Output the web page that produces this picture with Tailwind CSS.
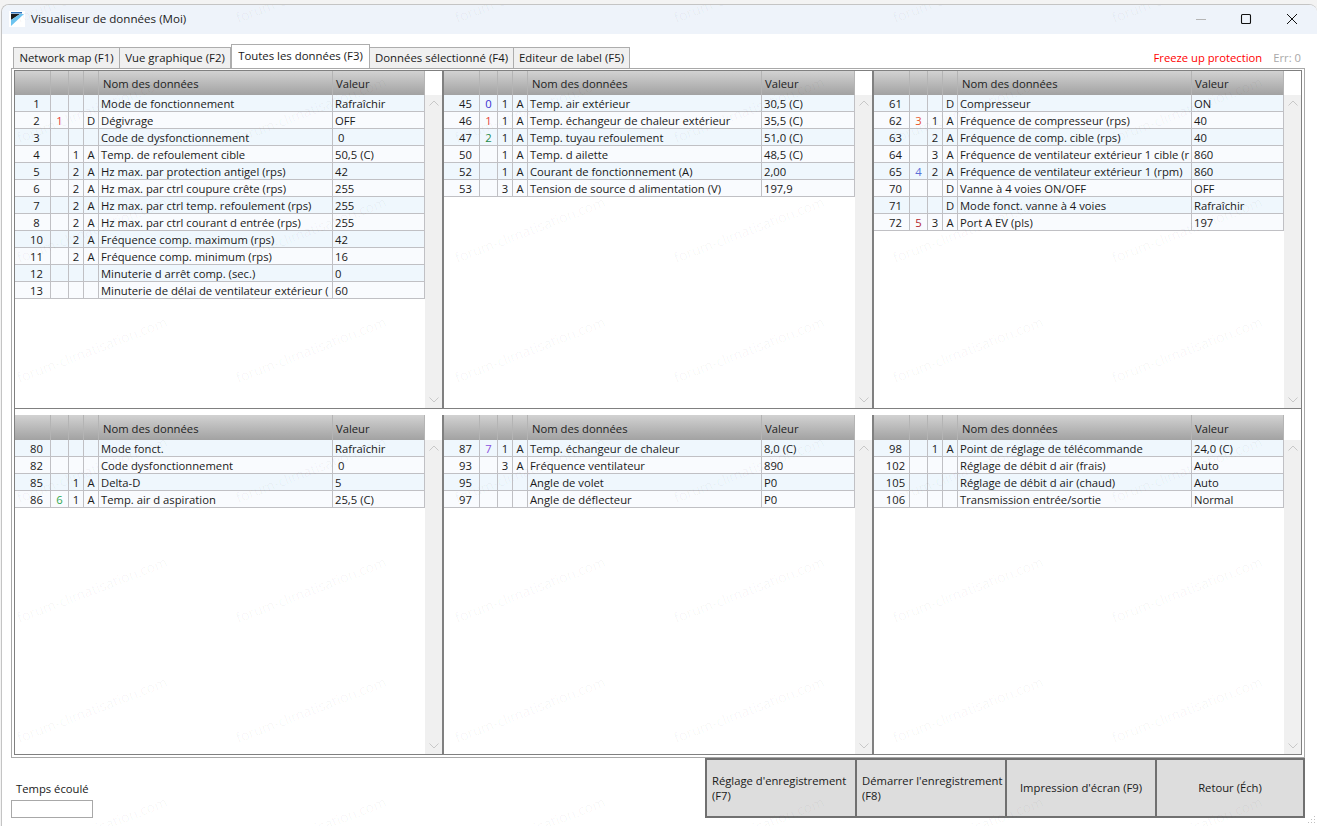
<!DOCTYPE html>
<html lang="fr">
<head>
  <meta charset="UTF-8" />
  <title>Visualiseur de données (Moi)</title>
  <script src="https://cdn.jsdelivr.net/npm/@tailwindcss/browser@4"></script>
</head>
<body class="bg-[#f3f3f3] h-[826px] overflow-hidden font-['Open_Sans','Noto_Sans',sans-serif] text-[11.25px] text-[#1a1a1a]">

  <div class="relative mt-[4px] ml-[1px] w-[1316px] h-[822px] bg-white rounded-t-[8px] border-l border-t border-[#c4c4c4] overflow-hidden">

    <!-- title bar -->
    <div class="flex items-center h-[29px] pb-[1px] bg-[#eef3fa]">
      <svg class="ml-[7px] w-[16px] h-[16px]" viewBox="0 0 16 16">
        <rect width="16" height="16" fill="#fff" />
        <rect x="2" y="1" width="11" height="1.5" fill="#2a6db5" />
        <polygon points="2,3 11,3 2,9" fill="#1a1a1a" />
        <polygon points="11,3 15,3 2,15 2,9" fill="#6cc3ef" />
      </svg>
      <span class="ml-[6px] text-[11.6px] text-[#222]">Visualiseur de données (Moi)</span>
      <div class="ml-auto flex items-center">
        <svg class="w-[12px] h-[12px] mr-[33px]" viewBox="0 0 12 12"><path d="M1 6.5h10" stroke="#b5b5b5" fill="none" /></svg>
        <svg class="w-[12px] h-[12px] mr-[34px]" viewBox="0 0 12 12"><rect x="1.5" y="1.5" width="9" height="9" rx="1" stroke="#111" stroke-width="1.1" fill="none" /></svg>
        <svg class="w-[12px] h-[12px] mr-[19px]" viewBox="0 0 12 12"><path d="M1 1l10 10M11 1L1 11" stroke="#111" stroke-width="1" fill="none" /></svg>
      </div>
    </div>

    <!-- tabs -->
    <div class="flex items-end h-[34px] pl-[11px] text-[11.4px]">
      <button class="w-[107px] h-[21px] pb-[1px] bg-[#f0f0f0] border border-b-0 border-[#adadad]">Network map (F1)</button>
      <button class="w-[111px] h-[21px] pb-[1px] bg-[#f0f0f0] border border-b-0 border-l-0 border-[#adadad]">Vue graphique (F2)</button>
      <button class="w-[139px] h-[24px] bg-white border border-b-0 border-[#adadad] pb-[1px]">Toutes les données (F3)</button>
      <button class="w-[144px] h-[21px] pb-[1px] bg-[#f0f0f0] border border-b-0 border-l-0 border-[#adadad]">Données sélectionné (F4)</button>
      <button class="w-[116px] h-[21px] pb-[1px] bg-[#f0f0f0] border border-b-0 border-l-0 border-[#adadad]">Editeur de label (F5)</button>
      <span class="ml-auto mb-[1px] text-[11.25px] text-[#ff0000]">Freeze up protection</span>
      <span class="ml-[11px] mr-[16px] mb-[1px] text-[11.25px] text-[#a8a8a8]">Err: 0</span>
    </div>

    <!-- data frame -->
    <div class="ml-[9px] w-[1294px] h-[690px] border border-[#a8a8a8] px-[2px] pt-[1px] pb-[2px]">
      <div class="h-full border border-[#808080] bg-white">
        <div id="top" class="flex h-[338px] border-b border-[#808080]"></div>
        <div id="bottom" class="flex h-[339px] mt-[6px]"></div>
      </div>
    </div>

    <!-- footer -->
    <div class="flex h-[60px]">
      <div class="ml-[9px] w-[82px] pt-[23px]">
        <div class="pl-[5px] leading-[16px]">Temps écoulé</div>
        <div class="mt-[3px] h-[18px] border border-[#a8a8a8] bg-white"></div>
      </div>
      <div class="ml-[612px] flex">
        <button class="w-[150px] h-[60px] bg-[#dddddd] border-y-2 border-l-2 border-[#707070] text-left pl-[5px] leading-[15px] whitespace-nowrap">Réglage d'enregistrement<br />(F7)</button>
        <button class="w-[150px] h-[60px] bg-[#dddddd] border-y-2 border-l-2 border-[#707070] text-left pl-[5px] leading-[15px] whitespace-nowrap">Démarrer l'enregistrement<br />(F8)</button>
        <button class="w-[150px] h-[60px] pt-[1px] bg-[#dddddd] border-y-2 border-l-2 border-[#707070]">Impression d'écran (F9)</button>
        <button class="w-[150px] h-[60px] pt-[1px] bg-[#dddddd] border-2 border-[#707070]">Retour (Éch)</button>
      </div>
    </div>

    <svg class="absolute right-0 bottom-0 w-[12px] h-[12px]" viewBox="0 0 12 12" fill="#c0c0c0">
      <rect x="9" y="2" width="1" height="1" /><rect x="6" y="5" width="1" height="1" /><rect x="9" y="5" width="1" height="1" />
      <rect x="3" y="8" width="1" height="1" /><rect x="6" y="8" width="1" height="1" /><rect x="9" y="8" width="1" height="1" />
    </svg>

    <!-- watermark -->
    <div id="marks" class="absolute inset-0 pointer-events-none"></div>
  </div>

  <script>
    const panels = [
      ['top', [
        ['1', '', '', '', 'Mode de fonctionnement', 'Rafraîchir'],
        ['2', '1', '', 'D', 'Dégivrage', 'OFF'],
        ['3', '', '', '', 'Code de dysfonctionnement', ' 0'],
        ['4', '', '1', 'A', 'Temp. de refoulement cible', '50,5 (C)'],
        ['5', '', '2', 'A', 'Hz max. par protection antigel (rps)', '42'],
        ['6', '', '2', 'A', 'Hz max. par ctrl coupure crête (rps)', '255'],
        ['7', '', '2', 'A', 'Hz max. par ctrl temp. refoulement (rps)', '255'],
        ['8', '', '2', 'A', 'Hz max. par ctrl courant d entrée (rps)', '255'],
        ['10', '', '2', 'A', 'Fréquence comp. maximum (rps)', '42'],
        ['11', '', '2', 'A', 'Fréquence comp. minimum (rps)', '16'],
        ['12', '', '', '', 'Minuterie d arrêt comp. (sec.)', '0'],
        ['13', '', '', '', 'Minuterie de délai de ventilateur extérieur (', '60'],
      ]],
      ['top', [
        ['45', '0', '1', 'A', 'Temp. air extérieur', '30,5 (C)'],
        ['46', '1', '1', 'A', 'Temp. échangeur de chaleur extérieur', '35,5 (C)'],
        ['47', '2', '1', 'A', 'Temp. tuyau refoulement', '51,0 (C)'],
        ['50', '', '1', 'A', 'Temp. d ailette', '48,5 (C)'],
        ['52', '', '1', 'A', 'Courant de fonctionnement (A)', '2,00'],
        ['53', '', '3', 'A', 'Tension de source d alimentation (V)', '197,9'],
      ]],
      ['top', [
        ['61', '', '', 'D', 'Compresseur', 'ON'],
        ['62', '3', '1', 'A', 'Fréquence de compresseur (rps)', '40'],
        ['63', '', '2', 'A', 'Fréquence de comp. cible (rps)', '40'],
        ['64', '', '3', 'A', 'Fréquence de ventilateur extérieur 1 cible (r', '860'],
        ['65', '4', '2', 'A', 'Fréquence de ventilateur extérieur 1 (rpm)', '860'],
        ['70', '', '', 'D', 'Vanne à 4 voies ON/OFF', 'OFF'],
        ['71', '', '', 'D', 'Mode fonct. vanne à 4 voies', 'Rafraîchir'],
        ['72', '5', '3', 'A', 'Port A EV (pls)', '197'],
      ]],
      ['bottom', [
        ['80', '', '', '', 'Mode fonct.', 'Rafraîchir'],
        ['82', '', '', '', 'Code dysfonctionnement', ' 0'],
        ['85', '', '1', 'A', 'Delta-D', '5'],
        ['86', '6', '1', 'A', 'Temp. air d aspiration', '25,5 (C)'],
      ]],
      ['bottom', [
        ['87', '7', '1', 'A', 'Temp. échangeur de chaleur', '8,0 (C)'],
        ['93', '', '3', 'A', 'Fréquence ventilateur', '890'],
        ['95', '', '', '', 'Angle de volet', 'P0'],
        ['97', '', '', '', 'Angle de déflecteur', 'P0'],
      ]],
      ['bottom', [
        ['98', '', '1', 'A', 'Point de réglage de télécommande', '24,0 (C)'],
        ['102', '', '', '', 'Réglage de débit d air (frais)', 'Auto'],
        ['105', '', '', '', 'Réglage de débit d air (chaud)', 'Auto'],
        ['106', '', '', '', 'Transmission entrée/sortie', 'Normal'],
      ]],
    ];

    const digitColors = {
      '0': 'text-[#3a2fd0]', '1': 'text-[#e8443a]', '2': 'text-[#1f8a4c]', '3': 'text-[#e8552a]',
      '4': 'text-[#5a6fd8]', '5': 'text-[#b3262e]', '6': 'text-[#2fa84f]', '7': 'text-[#8a4fe0]',
    };

    const chevron = d => `<svg class="w-[10px] h-[6px]" viewBox="0 0 10 6"><path d="${d}" stroke="#c8c8c8" fill="none" /></svg>`;

    function rowHtml(r, i) {
      const bg = i % 2 ? 'bg-[#f9fbfe]' : 'bg-[#eff7fd]';
      const cell = 'h-full border-r border-[#c0c0c4] overflow-hidden whitespace-pre';
      return `<div class="flex h-[17px] leading-[18px] border-b border-[#c0c0c4] ${bg}">
        <div class="${cell} w-[36px] text-center pl-[8px]">${r[0]}</div>
        <div class="${cell} w-[18px] text-center ${digitColors[r[1]] || ''}">${r[1]}</div>
        <div class="${cell} w-[15px] text-center">${r[2]}</div>
        <div class="${cell} w-[15px] text-center">${r[3]}</div>
        <div class="${cell} w-[234px] pl-[2px]">${r[4]}</div>
        <div class="${cell} flex-1 pl-[2px]">${r[5]}</div>
      </div>`;
    }

    // panel widths differ by a pixel or two in the original window
    const panelWidth = ['w-[427px]', 'w-[430px]', 'w-[429px]', 'w-[427px]', 'w-[430px]', 'w-[429px]'];
    const tableWidth = ['w-[410px]', 'w-[411px]', 'w-[410px]', 'w-[410px]', 'w-[411px]', 'w-[410px]'];

    panels.forEach((p, idx) => {
      const head = 'h-full border-r border-[#b4b4b4]';
      const sep = idx % 3 ? 'border-l-2 border-[#808080]' : '';
      const headBox = p[0] === 'top' ? 'h-[24px] leading-[26px]' : 'h-[25px] leading-[28px]';
      const barTop = p[0] === 'top' ? 'mt-[24px]' : 'mt-[25px]';
      document.getElementById(p[0]).innerHTML += `<div class="flex ${panelWidth[idx]} h-full ${sep}">
        <div class="${tableWidth[idx]}">
          <div class="flex ${headBox} bg-linear-to-b from-[#d2d2d2] to-[#a2a2a2] text-[#222]">
            <div class="${head} w-[36px]"></div><div class="${head} w-[18px]"></div><div class="${head} w-[15px]"></div><div class="${head} w-[15px]"></div>
            <div class="${head} w-[234px] pl-[4px]">Nom des données</div><div class="${head} flex-1 pl-[3px]">Valeur</div>
          </div>
          ${p[1].map(rowHtml).join('')}
        </div>
        <div class="flex-1 ${barTop} bg-[#f0f0f0] flex flex-col items-center justify-between py-[5px]">
          ${chevron('M0.5 5.5L5 1l4.5 4.5')}${chevron('M0.5 0.5L5 5l4.5-4.5')}
        </div>
      </div>`;
    });

    // faint forum watermark repeated over the window
    const marks = document.getElementById('marks');
    for (let row = 0; row < 8; row++) {
      for (let col = 0; col < 6; col++) {
        const el = document.createElement('div');
        el.className = 'absolute w-[170px] text-center whitespace-nowrap text-[14px] leading-[20px] text-black/[0.04] -rotate-[21deg]';
        el.style.left = (92 + col * 219 - 87) + 'px';
        el.style.top = (row * 120 - 10 - 15) + 'px';
        el.textContent = 'forum-climatisation.com';
        marks.appendChild(el);
      }
    }
  </script>
</body>
</html>
